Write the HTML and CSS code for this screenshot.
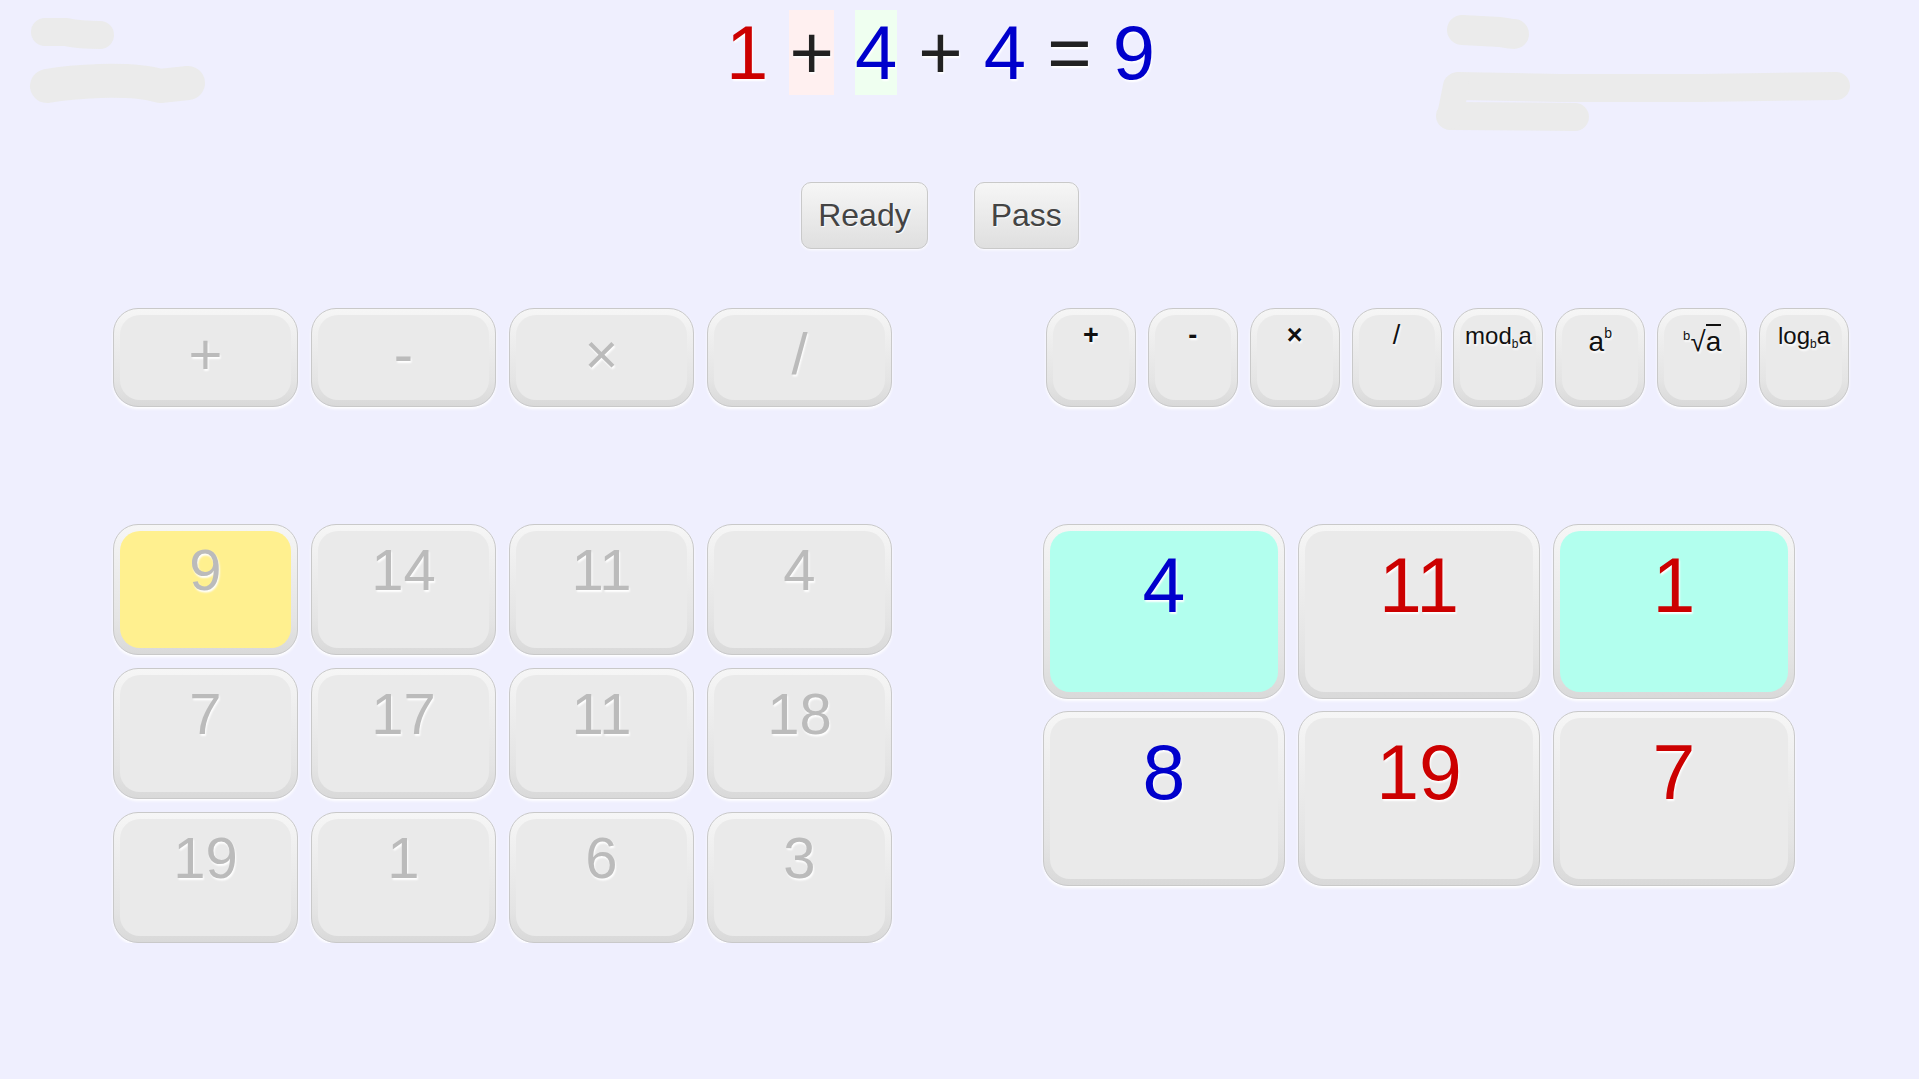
FILE: index.html
```html
<!DOCTYPE html>
<html lang="en">
<head>
<meta charset="utf-8">
<title>Equation game</title>
<link rel="stylesheet" href="styles.css">
</head>
<body>
<header class="top">
  <div class="smudge smudge-left">
    <svg width="220" height="120" viewBox="0 0 220 120">
      <g fill="none" stroke="#ebebeb" stroke-linecap="round" stroke-linejoin="round">
        <path d="M45 32 L66 32 Q80 35 100 35" stroke-width="28"/>
        <path d="M47 86 Q70 82 100 81 Q140 80 160 86 L188 83" stroke-width="34"/>
      </g>
    </svg>
  </div>
  <div class="equation"><span class="red">1</span> <span class="dark hl-pink">+</span> <span class="blue hl-green">4</span> <span class="dark">+</span> <span class="blue">4</span> <span class="dark">=</span> <span class="blue">9</span></div>
  <div class="smudge smudge-right">
    <svg width="440" height="140" viewBox="1420 0 440 140">
      <g fill="none" stroke="#ebebeb" stroke-linecap="round" stroke-linejoin="round">
        <path d="M1462 30 L1500 32 Q1512 34 1514 34" stroke-width="30"/>
        <path d="M1458 86 L1560 88 L1700 88 L1836 86" stroke-width="28"/>
        <path d="M1450 116 L1575 117" stroke-width="28"/>
        <path d="M1456 86 L1450 116" stroke-width="26"/>
      </g>
    </svg>
  </div>
</header>

<div class="controls">
  <button class="btn">Ready</button>
  <button class="btn">Pass</button>
</div>

<main class="board">
  <div class="ops-left">
    <div class="key"><div class="face">+</div></div>
    <div class="key"><div class="face">-</div></div>
    <div class="key"><div class="face">×</div></div>
    <div class="key"><div class="face">/</div></div>
  </div>

  <div class="ops-right">
    <div class="key"><div class="face"><span class="sym">+</span></div></div>
    <div class="key"><div class="face"><span class="sym">-</span></div></div>
    <div class="key"><div class="face"><span class="sym">×</span></div></div>
    <div class="key"><div class="face"><span class="sym thin">/</span></div></div>
    <div class="key"><div class="face">mod<span class="sub">b</span>a</div></div>
    <div class="key"><div class="face"><span class="big">a<span class="sup">b</span></span></div></div>
    <div class="key"><div class="face"><span class="big"><span class="sup-pre">b</span>√<span class="over">a</span></span></div></div>
    <div class="key"><div class="face">log<span class="sub">b</span>a</div></div>
  </div>

  <div class="nums-left">
    <div class="key"><div class="face yellow">9</div></div>
    <div class="key"><div class="face">14</div></div>
    <div class="key"><div class="face">11</div></div>
    <div class="key"><div class="face">4</div></div>
    <div class="key"><div class="face">7</div></div>
    <div class="key"><div class="face">17</div></div>
    <div class="key"><div class="face">11</div></div>
    <div class="key"><div class="face">18</div></div>
    <div class="key"><div class="face">19</div></div>
    <div class="key"><div class="face">1</div></div>
    <div class="key"><div class="face">6</div></div>
    <div class="key"><div class="face">3</div></div>
  </div>

  <div class="nums-right">
    <div class="key"><div class="face cyan blue">4</div></div>
    <div class="key"><div class="face red">11</div></div>
    <div class="key"><div class="face cyan red">1</div></div>
    <div class="key"><div class="face blue">8</div></div>
    <div class="key"><div class="face red">19</div></div>
    <div class="key"><div class="face red">7</div></div>
  </div>
</main>
</body>
</html>
```

FILE: styles.css
```css
html, body {
  margin: 0;
  padding: 0;
}

body {
  background: #efeffe;
  font-family: "Liberation Sans", Arial, sans-serif;
  color: #222;
}

/* ---------- header ---------- */
.top {
  display: grid;
  grid-template-columns: 1fr auto 1fr;
  height: 98px;
}

.smudge svg {
  display: block;
}

.smudge-right {
  justify-self: end;
  margin-right: 59px;
}

.equation {
  padding-top: 10px;
  margin-right: 38px;
  font-size: 76px;
  line-height: 86px;
  white-space: pre;
  text-shadow: 1px 2px 2px #fff;
}

.red { color: #cc0000; }
.blue { color: #0000cc; }
.dark { color: #222; }

.hl-pink { background: #fff0f0; }
.hl-green { background: #effff0; }

/* ---------- controls ---------- */
.controls {
  display: flex;
  justify-content: center;
  gap: 46px;
  margin-top: 84px;
  padding-right: 39px;
}

.btn {
  box-sizing: border-box;
  height: 67px;
  padding: 0 16px;
  border: 1px solid #c9c9c9;
  border-radius: 10px;
  background: linear-gradient(to bottom, #f6f6f6, #dfdfdf);
  box-shadow: 0 1px 3px #fff;
  font-family: "Liberation Sans", Arial, sans-serif;
  font-size: 32px;
  line-height: 65px;
  color: #444;
  text-shadow: 1px 1px 1px #fff;
}

/* ---------- board ---------- */
.board {
  display: grid;
  grid-template-columns: 779px 806px;
  grid-template-rows: 99px auto;
  column-gap: 151px;
  row-gap: 117px;
  padding-left: 113px;
  margin-top: 59px;
}

.key {
  box-sizing: border-box;
  border: 1px solid #c9c9c9;
  border-radius: 25px;
  padding: 6px;
  background: linear-gradient(to bottom, #f6f6f6 0%, #ededed 35%, #e4e4e4 75%, #d9d9d9 100%);
  box-shadow: 0 2px 3px #fff;
}

.face {
  box-sizing: border-box;
  height: 100%;
  border-radius: 20px;
  background: #eaeaea;
  text-align: center;
  line-height: 1;
  white-space: nowrap;
  text-shadow: 1px 2px 2px #fff;
}

.face.yellow { background: #fff08f; }
.face.cyan { background: #b2ffee; }

/* left operators + numbers */
.ops-left,
.nums-left {
  display: grid;
  grid-template-columns: repeat(4, 185px);
  column-gap: 13px;
}

.ops-left { height: 99px; }

.nums-left {
  grid-auto-rows: 131px;
  row-gap: 13px;
}

.ops-left .face,
.nums-left .face {
  padding-top: 10px;
  font-size: 58px;
  color: #bbb;
}

/* right operators */
.ops-right {
  display: grid;
  grid-template-columns: repeat(8, 90px);
  column-gap: 11.86px;
  height: 99px;
  margin-left: 3px;
}

.ops-right .face {
  padding-top: 9px;
  font-size: 24px;
  color: #111;
}

.ops-right .sym {
  display: inline-block;
  margin-top: -2px;
  font-size: 27px;
  font-weight: bold;
}

.ops-right .sym.thin {
  font-weight: normal;
}

.ops-right .big {
  display: inline-block;
  margin-top: 4px;
  font-size: 28px;
}

.sub {
  position: relative;
  top: 4px;
  font-size: 12px;
  line-height: 0;
}

.sup {
  position: relative;
  top: -13px;
  font-size: 14px;
  line-height: 0;
}

.sup-pre {
  position: relative;
  top: -11px;
  font-size: 13px;
  line-height: 0;
}

.over {
  border-top: 2px solid #111;
}

/* right numbers */
.nums-right {
  display: grid;
  grid-template-columns: repeat(3, 242px);
  grid-auto-rows: 175px;
  column-gap: 13px;
  row-gap: 12px;
}

.nums-right .face {
  padding-top: 16px;
  font-size: 77px;
}
```
